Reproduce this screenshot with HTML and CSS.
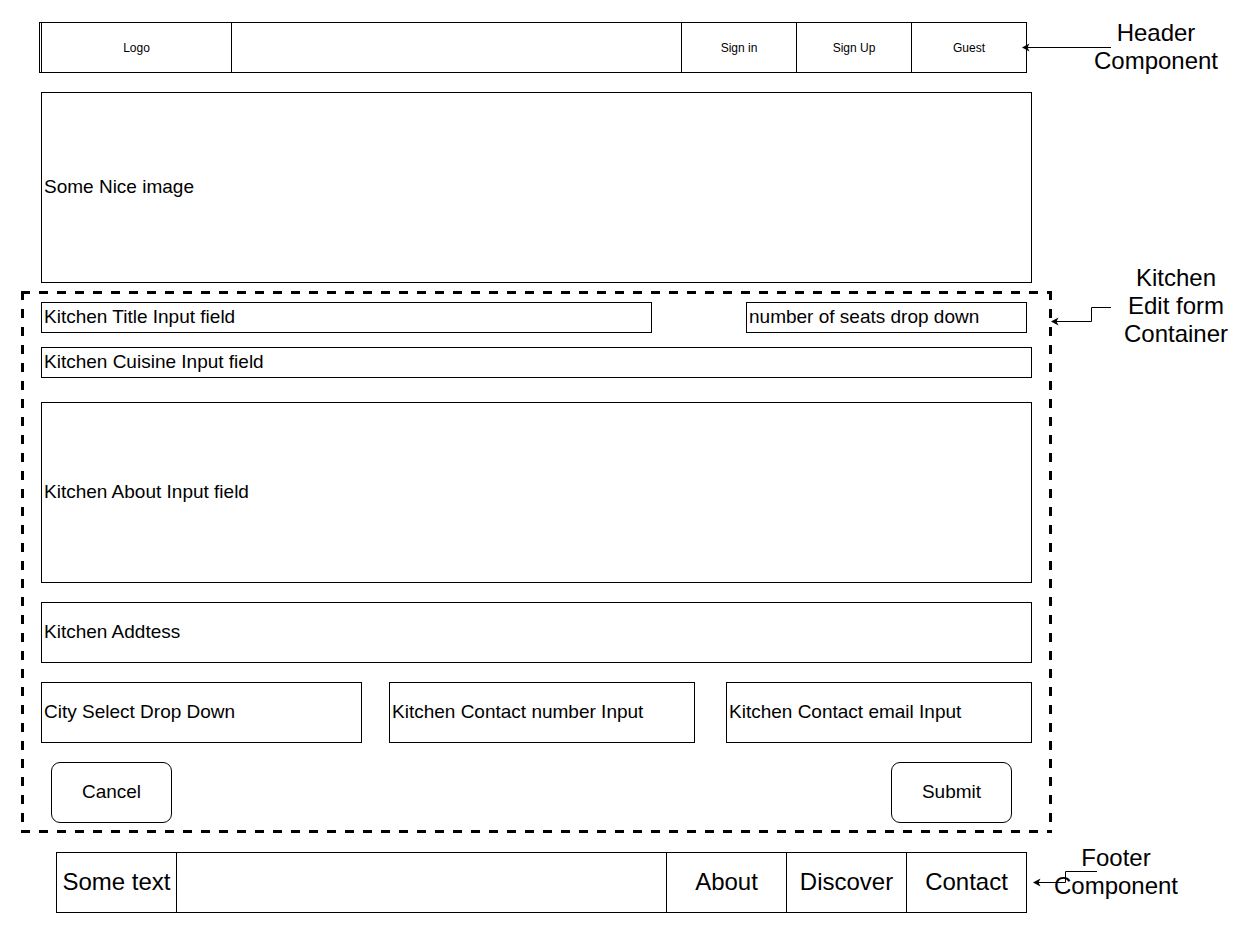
FILE: index.html
```html
<!DOCTYPE html>
<html lang="en">
<head>
<meta charset="utf-8">
<title>Kitchen Edit Wireframe</title>
<link rel="stylesheet" href="styles.css">
</head>
<body>
<div class="canvas">
  <div class="page">
    <header class="header">
      <div class="hcell logo">Logo</div>
      <div class="hcell spacer"></div>
      <div class="hcell nav">Sign in</div>
      <div class="hcell nav">Sign Up</div>
      <div class="hcell nav last">Guest</div>
    </header>

    <div class="hero box">Some Nice image</div>

    <form class="form">
      <div class="row row-title">
        <div class="box field title">Kitchen Title Input field</div>
        <div class="box field seats">number of seats drop down</div>
      </div>
      <div class="box field cuisine">Kitchen Cuisine Input field</div>
      <div class="box field about">Kitchen About Input field</div>
      <div class="box field address">Kitchen Addtess</div>
      <div class="row row-contact">
        <div class="box field city">City Select Drop Down</div>
        <div class="box field phone">Kitchen Contact number Input</div>
        <div class="box field email">Kitchen Contact email Input</div>
      </div>
      <div class="row row-buttons">
        <div class="btn">Cancel</div>
        <div class="btn">Submit</div>
      </div>
    </form>

    <footer class="footer">
      <div class="fcell brand">Some text</div>
      <div class="fcell spacer"></div>
      <div class="fcell link">About</div>
      <div class="fcell link">Discover</div>
      <div class="fcell link last">Contact</div>
    </footer>
  </div>

  <div class="note note-header">Header<br>Component</div>
  <div class="note note-form">Kitchen<br>Edit form<br>Container</div>
  <div class="note note-footer">Footer<br>Component</div>

  <svg class="connectors" width="1249" height="933" viewBox="0 0 1249 933">
    <g fill="none" stroke="#000" stroke-width="1">
      <path d="M1111 47.5 H1026"/>
      <path d="M1111 307.5 H1091.5 V321.5 H1055"/>
      <path d="M1097 871.5 H1065.5 V882.5 H1037"/>
    </g>
    <g fill="#000">
      <path d="M1022 47.5 L1029.5 43.5 L1027.5 47.5 L1029.5 51.5 Z"/>
      <path d="M1051 321.5 L1058.5 317.5 L1056.5 321.5 L1058.5 325.5 Z"/>
      <path d="M1033 882.5 L1040.5 878.5 L1038.5 882.5 L1040.5 886.5 Z"/>
    </g>
  </svg>
</div>
</body>
</html>
```

FILE: styles.css
```css
* {
  box-sizing: border-box;
}

html, body {
  margin: 0;
  padding: 0;
  background: #ffffff;
}

body {
  font-family: "Liberation Sans", Arial, sans-serif;
  color: #000;
}

.canvas {
  position: relative;
  width: 1249px;
  height: 933px;
  overflow: hidden;
}

.page {
  display: flex;
  flex-direction: column;
  align-items: flex-start;
  padding-top: 22px;
}

/* Header */
.header {
  display: flex;
  margin-left: 39px;
  width: 988px;
  height: 51px;
  border: 1px solid #000;
  padding-left: 1px;
  font-size: 12px;
}

.hcell {
  display: flex;
  align-items: center;
  justify-content: center;
  border-right: 1px solid #000;
  height: 100%;
}

.hcell.logo {
  width: 191px;
  border-left: 1px solid #000;
}

.hcell.spacer {
  width: 450px;
}

.hcell.nav {
  width: 115px;
}

.hcell.nav.last {
  width: 114px;
  border-right: 0;
}

/* Generic boxes */
.box {
  border: 1px solid #000;
  display: flex;
  align-items: center;
  padding-left: 2px;
  padding-bottom: 2px;
  font-size: 19px;
  white-space: nowrap;
}

.hero {
  margin-top: 19px;
  margin-left: 41px;
  width: 991px;
  height: 191px;
}

/* Form container with dashed border */
.form {
  margin: 8px 0 0 21px;
  width: 1031px;
  height: 542px;
  padding: 11px 20px 10px 20px;
  display: flex;
  flex-direction: column;
  background:
    repeating-linear-gradient(90deg, #000 0 9px, transparent 9px 18px) left top / 100% 3px no-repeat,
    repeating-linear-gradient(90deg, #000 0 9px, transparent 9px 18px) left bottom / 100% 3px no-repeat,
    repeating-linear-gradient(180deg, #000 0 9px, transparent 9px 18px) left top / 3px 100% no-repeat,
    repeating-linear-gradient(180deg, #000 0 9px, transparent 9px 18px) right top / 3px 100% no-repeat;
}

.row {
  display: flex;
}

.row-title {
  height: 31px;
}

.field.title {
  width: 611px;
}

.field.seats {
  width: 281px;
  margin-left: auto;
  margin-right: 5px;
}

.field.cuisine {
  margin-top: 14px;
  height: 31px;
  width: 991px;
}

.field.about {
  margin-top: 24px;
  height: 181px;
  width: 991px;
}

.field.address {
  margin-top: 19px;
  height: 61px;
  width: 991px;
}

.row-contact {
  margin-top: 19px;
  height: 61px;
}

.field.city {
  width: 321px;
}

.field.phone {
  width: 306px;
  margin-left: 27px;
}

.field.email {
  width: 306px;
  margin-left: 31px;
}

.row-buttons {
  margin-top: 19px;
  height: 61px;
  justify-content: space-between;
  padding: 0 20px 0 10px;
}

.btn {
  width: 121px;
  height: 61px;
  border: 1px solid #000;
  border-radius: 9px;
  display: flex;
  align-items: center;
  justify-content: center;
  padding-bottom: 2px;
  font-size: 19px;
}

/* Footer */
.footer {
  display: flex;
  margin: 19px 0 0 56px;
  width: 971px;
  height: 61px;
  border: 1px solid #000;
  font-size: 24px;
}

.fcell {
  display: flex;
  align-items: center;
  justify-content: center;
  border-right: 1px solid #000;
  height: 100%;
  padding-bottom: 2px;
  white-space: nowrap;
}

.fcell.brand {
  width: 120px;
}

.fcell.spacer {
  width: 490px;
}

.fcell.link {
  width: 120px;
}

.fcell.link.last {
  width: 119px;
  border-right: 0;
}

/* Annotations on the diagram canvas */
.note {
  position: absolute;
  font-size: 24px;
  line-height: 28px;
  text-align: center;
  white-space: nowrap;
  transform: translateX(-50%);
}

.note-header {
  left: 1156px;
  top: 19px;
}

.note-form {
  left: 1176px;
  top: 264px;
}

.note-footer {
  left: 1116px;
  top: 844px;
}

.connectors {
  position: absolute;
  left: 0;
  top: 0;
  pointer-events: none;
}
```
